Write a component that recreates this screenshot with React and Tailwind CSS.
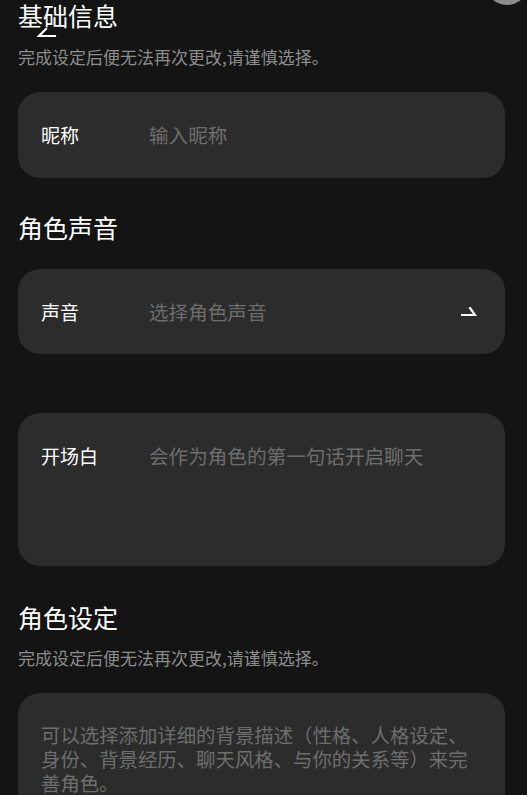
import React from "react";

const FONT = { fontFamily: '"Noto Sans CJK SC", "Noto Sans", sans-serif' };

const SectionTitle = ({ children, className = "" }) => (
  <h2 className={`text-[25px] leading-[32px] text-white font-normal ${className}`}>{children}</h2>
);

const Hint = ({ className = "" }) => (
  <p className={`text-[17px] leading-[24px] text-[#8c8c8c] ${className}`}>
    完成设定后便无法再次更改,请谨慎选择。
  </p>
);

const FieldRow = ({ label, placeholder, right }) => (
  <div className="flex items-center w-full">
    <span className="w-[108px] shrink-0 text-[19px] leading-[26px] text-white">{label}</span>
    <span className="flex-1 text-[19.6px] leading-[26px] text-[#6e6e6e]">{placeholder}</span>
    {right}
  </div>
);

export default function App() {
  return (
    <div style={FONT} className="relative min-h-screen bg-[#141414] overflow-hidden">
      {/* top bar remnants */}
      <svg className="absolute left-[36px] top-[27px]" width="22" height="12" viewBox="0 0 22 12">
        <path d="M10 2 L3 9 L19 9" fill="none" stroke="#fff" strokeWidth="2.2" strokeLinecap="square" />
      </svg>
      <div className="absolute right-[-2px] top-[-39px] w-[44px] h-[44px] rounded-full bg-[#8c8c8c]" />

      <div className="flex flex-col pl-[18px] pr-[22px] pb-10">
        <SectionTitle className="-mt-[1px]">基础信息</SectionTitle>
        <Hint className="mt-[14px]" />

        <div className="mt-[23px] h-[86px] rounded-[22px] bg-[#2c2c2c] flex items-center pl-[23px] pr-6">
          <FieldRow label="昵称" placeholder="输入昵称" />
        </div>

        <SectionTitle className="mt-[33px]">角色声音</SectionTitle>

        <div className="mt-[26px] h-[85px] rounded-[22px] bg-[#2c2c2c] flex items-center pl-[23px] pr-[28px]">
          <FieldRow
            label="声音"
            placeholder="选择角色声音"
            right={
              <svg width="16" height="10" viewBox="0 0 16 10">
                <path d="M9 1 L14 8 L1 8" fill="none" stroke="#fff" strokeWidth="2.2" strokeLinecap="square" />
              </svg>
            }
          />
        </div>

        <div className="mt-[59px] h-[153px] rounded-[22px] bg-[#2c2c2c] pl-[23px] pr-6 pt-[30px]">
          <FieldRow label="开场白" placeholder="会作为角色的第一句话开启聊天" />
        </div>

        <SectionTitle className="mt-[35px]">角色设定</SectionTitle>
        <Hint className="mt-[13px]" />

        <div className="mt-[23px] min-h-[150px] rounded-[22px] bg-[#2c2c2c] pl-[23px] pr-[22px] pt-[30px] pb-6">
          <p className="text-[19.4px] leading-[24px] text-[#6e6e6e]">
            可以选择添加详细的背景描述（性格、人格设定、身份、背景经历、聊天风格、与你的关系等）来完善角色。
          </p>
        </div>
      </div>
    </div>
  );
}
